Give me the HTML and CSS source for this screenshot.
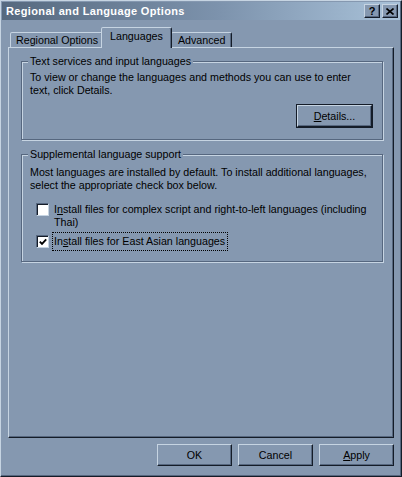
FILE: index.html
```html
<!DOCTYPE html>
<html lang="en">
<head>
  <meta charset="UTF-8">
  <title>Regional and Language Options</title>
  <link rel="stylesheet" href="styles.css">
</head>
<body>
  <div class="window">
    <div class="titlebar">
      <span class="title">Regional and Language Options</span>
      <div class="caption-btns">
        <span class="cap cap-help">?</span>
        <span class="cap cap-close">
          <svg width="8" height="7" viewBox="0 0 8 7"><path d="M0.5 0.5 L7.5 6.5 M7.5 0.5 L0.5 6.5" stroke="#000" stroke-width="1.6" fill="none"/></svg>
        </span>
      </div>
    </div>

    <div class="content">
      <div class="tabs">
        <div class="tab">Regional Options</div>
        <div class="tab active">Languages</div>
        <div class="tab">Advanced</div>
      </div>

      <div class="panel">
        <fieldset class="group group-text">
          <legend>Text services and input languages</legend>
          <p>To view or change the languages and methods you can use to enter<br>text, click Details.</p>
          <div class="group-actions">
            <button class="btn btn-default"><u>D</u>etails...</button>
          </div>
        </fieldset>

        <fieldset class="group group-supp">
          <legend>Supplemental language support</legend>
          <p>Most languages are installed by default. To install additional languages,<br>select the appropriate check box below.</p>
          <label class="check">
            <span class="box"></span>
            <span class="check-label">I<u>n</u>stall files for complex script and right-to-left languages (including<br>Thai)</span>
          </label>
          <label class="check">
            <span class="box">
              <svg width="8" height="8" viewBox="0 0 8 8"><polyline points="0.8,3.6 3,5.8 7.2,1.4" stroke="#000" stroke-width="1.9" fill="none"/></svg>
            </span>
            <span class="check-label focused">In<u>s</u>tall files for East Asian languages</span>
          </label>
        </fieldset>
      </div>

      <div class="footer">
        <button class="btn">OK</button>
        <button class="btn">Cancel</button>
        <button class="btn"><u>A</u>pply</button>
      </div>
    </div>
  </div>
</body>
</html>
```

FILE: styles.css
```css
:root {
  --face: #8598b0;
  --light: #c6d4e2;
  --shadow: #56677f;
  --dark: #141c28;
}

* {
  box-sizing: border-box;
  margin: 0;
  padding: 0;
}

body {
  font-family: 'Liberation Sans', Arial, sans-serif;
  font-size: 10.7px;
  line-height: 13px;
  color: #000;
  background: var(--face);
}

.window {
  width: 402px;
  height: 477px;
  padding: 1px;
  border: 1px solid;
  border-color: var(--light) var(--dark) var(--dark) var(--light);
  box-shadow: inset -1px -1px 0 var(--shadow);
  background: var(--face);
}

.titlebar {
  height: 18px;
  display: flex;
  align-items: center;
  justify-content: space-between;
  padding: 0 2px 0 4px;
  background: linear-gradient(to right, #56697f, #7d93ad 55%, #a9c2d9);
}

.title {
  color: #fff;
  font-weight: bold;
  font-size: 11px;
  letter-spacing: 0.35px;
}

.caption-btns {
  display: flex;
  gap: 2px;
}

.cap {
  width: 16px;
  height: 14px;
  display: flex;
  align-items: center;
  justify-content: center;
  background: var(--face);
  border: 1px solid;
  border-color: var(--light) var(--dark) var(--dark) var(--light);
  box-shadow: inset -1px -1px 0 var(--shadow);
  font-weight: bold;
  font-size: 11px;
}

.content {
  padding: 0 6px;
}

.tabs {
  display: flex;
  align-items: flex-end;
  height: 20px;
  margin-top: 7px;
  padding-left: 2px;
}

.tab {
  height: 15px;
  padding: 0 4px 0 5px;
  line-height: 14px;
  white-space: nowrap;
  border: 1px solid;
  border-bottom: none;
  border-color: var(--light) var(--dark) transparent var(--light);
  box-shadow: inset -1px 0 0 var(--shadow);
  border-radius: 2px 2px 0 0;
  background: var(--face);
}

.tab.active {
  position: relative;
  z-index: 1;
  height: 21px;
  margin: 0 -1px -1px -2px;
  padding: 0 8px 0 8px;
  line-height: 17px;
}

.tab:last-child {
  padding: 0 6px 0 6px;
}

.panel {
  height: 391px;
  padding: 7px 10px 0 12px;
  border: 1px solid;
  border-color: var(--light) var(--dark) var(--dark) var(--light);
  box-shadow: inset -1px -1px 0 var(--shadow);
}

.group {
  border: 1px solid var(--shadow);
  box-shadow: inset 1px 1px 0 var(--light), 1px 1px 0 var(--light);
  padding: 0 8px 0 8px;
  min-inline-size: 0;
}

.group legend {
  padding: 0 2px;
  margin-left: -2px;
  background: var(--face);
}

.group p {
  margin-top: 3px;
  white-space: nowrap;
}

.group-text {
  height: 85px;
}

.group-actions {
  display: flex;
  justify-content: flex-end;
  margin-top: 8px;
  padding-right: 2px;
}

.group-supp {
  margin-top: 8px;
  height: 114px;
}

.group-supp p {
  margin-top: 5px;
}

.btn {
  width: 75px;
  height: 22px;
  font-family: inherit;
  font-size: 10.7px;
  color: #000;
  background: var(--face);
  border: 1px solid;
  border-color: var(--light) var(--dark) var(--dark) var(--light);
  box-shadow: inset -1px -1px 0 var(--shadow);
}

.btn-default {
  outline: 1px solid var(--dark);
}

.check {
  display: flex;
  align-items: flex-start;
  gap: 5px;
  margin-left: 6px;
}

.check:first-of-type {
  margin-top: 10px;
}

.check + .check {
  margin-top: 4px;
}

.box {
  width: 13px;
  height: 13px;
  margin-top: 1px;
  display: flex;
  align-items: center;
  justify-content: center;
  background: #fff;
  border: 1px solid;
  border-color: var(--shadow) var(--light) var(--light) var(--shadow);
  box-shadow: inset 1px 1px 0 var(--dark);
  flex: none;
}

.check-label {
  padding: 1px 1px 1px 0;
  white-space: nowrap;
}

.check-label.focused {
  outline: 1px dotted #000;
  outline-offset: 1px;
}

.footer {
  display: flex;
  justify-content: flex-end;
  gap: 6px;
  margin-top: 6px;
}
```
